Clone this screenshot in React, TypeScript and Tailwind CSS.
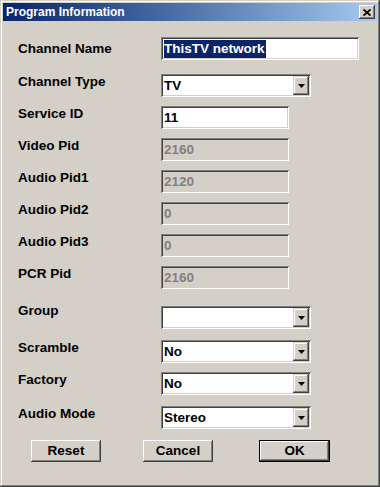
import React from "react";

const sunken =
  "shadow-[inset_1px_1px_#808080,inset_-1px_-1px_#ffffff,inset_2px_2px_#404040,inset_-2px_-2px_#d4d0c8]";

function Arrow() {
  return (
    <svg width="7" height="4" viewBox="0 0 7 4">
      <polygon points="0,0 7,0 3.5,4" fill="#000" />
    </svg>
  );
}

function TextBox({
  value,
  width,
  disabled,
  selected,
}: {
  value: string;
  width: string;
  disabled?: boolean;
  selected?: boolean;
}) {
  return (
    <div
      className={`${width} h-[23px] ${sunken} ${
        disabled ? "bg-[#d4d0c8] text-[#808080]" : "bg-white text-black"
      } flex items-center pl-[3px]`}
    >
      {selected ? (
        <span className="bg-[#0a246a] text-white leading-[18px] pr-[1px]">{value}</span>
      ) : (
        <span className="leading-[18px]">{value}</span>
      )}
    </div>
  );
}

function Combo({ value }: { value: string }) {
  return (
    <div className={`w-[150px] h-[23px] ${sunken} bg-white flex items-stretch p-[2px]`}>
      <div className="flex-1 flex items-center pl-[1px] leading-[18px]">{value}</div>
      <div className="w-[16px] bg-[#d4d0c8] flex items-center justify-center shadow-[inset_-1px_-1px_#404040,inset_1px_1px_#d4d0c8,inset_-2px_-2px_#808080,inset_2px_2px_#ffffff]">
        <Arrow />
      </div>
    </div>
  );
}

function Row({
  label,
  mt,
  labelCls,
  children,
}: {
  label: string;
  mt: string;
  labelCls?: string;
  children: React.ReactNode;
}) {
  return (
    <div className={`flex items-start h-[23px] ${mt}`}>
      <div className={`w-[143px] leading-[15px] ${labelCls ?? ""}`}>{label}</div>
      {children}
    </div>
  );
}

export default function App() {
  return (
    <div className="w-[380px] h-[487px] bg-[#d4d0c8] p-[3px] shadow-[inset_-1px_-1px_#404040,inset_1px_1px_#d4d0c8,inset_-2px_-2px_#808080,inset_2px_2px_#ffffff] font-['Liberation_Sans',Arial,sans-serif] font-bold text-[13.5px] text-black">
      <div className="h-[18px] flex items-center justify-between bg-gradient-to-r from-[#0a246a] to-[#a6caf0] pl-[3px] pr-[2px]">
        <span className="text-white text-[12px] leading-[18px]">Program Information</span>
        <div className="w-[16px] h-[14px] bg-[#d4d0c8] flex items-center justify-center shadow-[inset_-1px_-1px_#404040,inset_1px_1px_#ffffff,inset_-2px_-2px_#808080,inset_2px_2px_#d4d0c8]">
          <svg width="8" height="7" viewBox="0 0 8 7">
            <path d="M0.5 0.5 L7.5 6.5 M7.5 0.5 L0.5 6.5" stroke="#000" strokeWidth="1.8" />
          </svg>
        </div>
      </div>

      <div className="pl-[15px]">
        <Row label="Channel Name" mt="mt-[16px]" labelCls="pt-[4px]">
          <TextBox value="ThisTV network" width="w-[198px]" selected />
        </Row>
        <Row label="Channel Type" mt="mt-[14px]">
          <Combo value="TV" />
        </Row>
        <Row label="Service ID" mt="mt-[9px]">
          <TextBox value="11" width="w-[128px]" />
        </Row>
        <Row label="Video Pid" mt="mt-[9px]">
          <TextBox value="2160" width="w-[128px]" disabled />
        </Row>
        <Row label="Audio Pid1" mt="mt-[9px]">
          <TextBox value="2120" width="w-[128px]" disabled />
        </Row>
        <Row label="Audio Pid2" mt="mt-[9px]">
          <TextBox value="0" width="w-[128px]" disabled />
        </Row>
        <Row label="Audio Pid3" mt="mt-[9px]">
          <TextBox value="0" width="w-[128px]" disabled />
        </Row>
        <Row label="PCR Pid" mt="mt-[9px]">
          <TextBox value="2160" width="w-[128px]" disabled />
        </Row>
        <Row label="Group" mt="mt-[17px]" labelCls="-mt-[3px]">
          <Combo value="" />
        </Row>
        <Row label="Scramble" mt="mt-[11px]">
          <Combo value="No" />
        </Row>
        <Row label="Factory" mt="mt-[9px]">
          <Combo value="No" />
        </Row>
        <Row label="Audio Mode" mt="mt-[11px]">
          <Combo value="Stereo" />
        </Row>

        <div className="flex mt-[11px]">
          <div className="ml-[13px] w-[70px] h-[22px] flex items-center justify-center shadow-[inset_-1px_-1px_#404040,inset_1px_1px_#ffffff,inset_-2px_-2px_#808080,inset_2px_2px_#d4d0c8]">
            Reset
          </div>
          <div className="ml-[42px] w-[70px] h-[22px] flex items-center justify-center shadow-[inset_-1px_-1px_#404040,inset_1px_1px_#ffffff,inset_-2px_-2px_#808080,inset_2px_2px_#d4d0c8]">
            Cancel
          </div>
          <div className="ml-[46px] w-[71px] h-[22px] flex items-center justify-center shadow-[inset_0_0_0_1px_#000000,inset_-2px_-2px_#404040,inset_2px_2px_#ffffff,inset_-3px_-3px_#808080,inset_3px_3px_#d4d0c8]">
            OK
          </div>
        </div>
      </div>
    </div>
  );
}
